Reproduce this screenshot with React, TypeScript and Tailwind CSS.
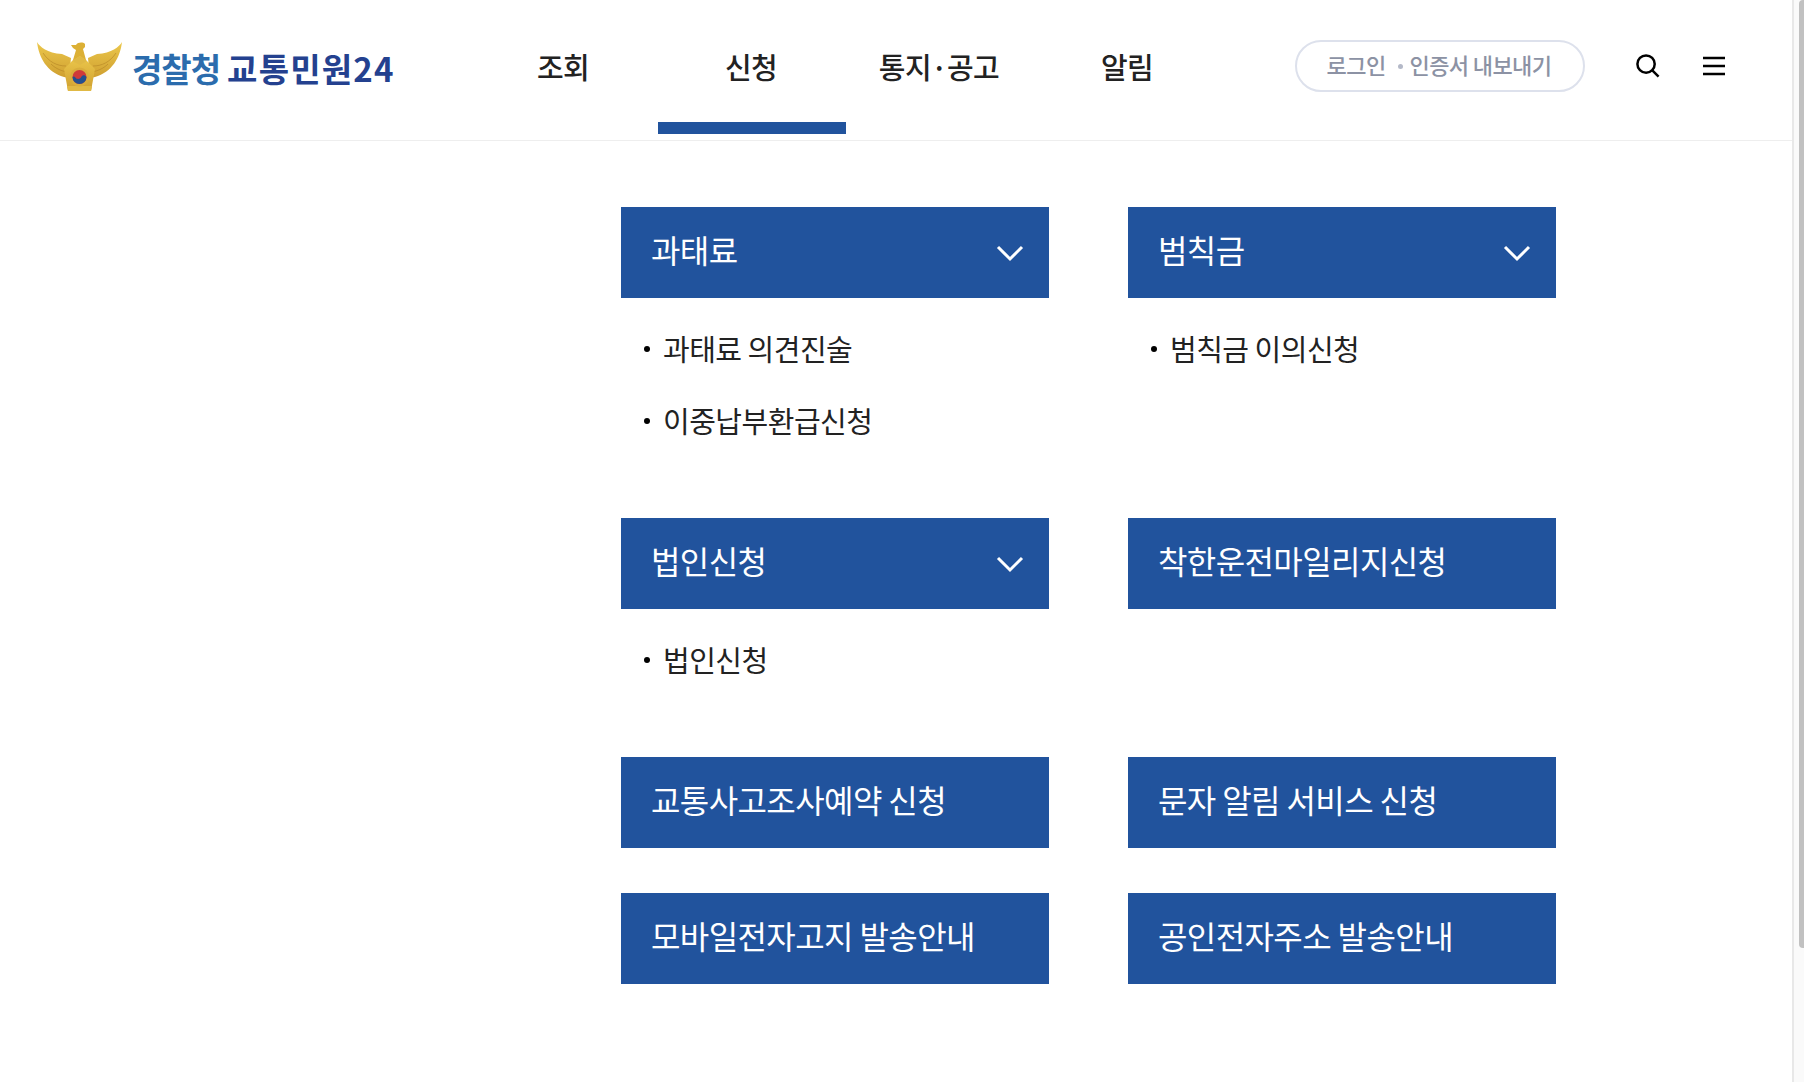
const FONT = 'font-["Noto_Sans_CJK_KR","Noto_Sans",sans-serif]'

const navItems = ['조회', '신청', '통지·공고', '알림']

type Card = { title: string; links?: string[] }

const cards: Card[] = [
  { title: '과태료', links: ['과태료 의견진술', '이중납부환급신청'] },
  { title: '범칙금', links: ['범칙금 이의신청'] },
  { title: '법인신청', links: ['법인신청'] },
  { title: '착한운전마일리지신청' },
  { title: '교통사고조사예약 신청' },
  { title: '문자 알림 서비스 신청' },
  { title: '모바일전자고지 발송안내' },
  { title: '공인전자주소 발송안내' },
]

function Emblem() {
  return (
    <svg className="shrink-0" width="86" height="52" viewBox="0 0 86 52" aria-hidden="true">
      <defs>
        <linearGradient id="gold" x1="0" y1="0" x2="0" y2="1">
          <stop offset="0" stopColor="#ecc84c" />
          <stop offset="1" stopColor="#cf9f30" />
        </linearGradient>
      </defs>
      {/* wings */}
      <path d="M0 1 C3 6 10 12 25 13 L34 17 L32 37 L27 36 C10 31 2 17 0 1Z" fill="url(#gold)" />
      <path d="M85 1 C82 6 75 12 60 13 L51 17 L53 37 L58 36 C75 31 83 17 85 1Z" fill="url(#gold)" />
      <path d="M6 12 C12 21 20 25 29 25 M14 23 C19 28 25 30 30 31 M79 12 C73 21 65 25 56 25 M71 23 C66 28 60 30 55 31" fill="none" stroke="#b98a28" strokeWidth="1" opacity="0.7" />
      {/* head and neck */}
      <path d="M34 4 L39 4 C41 1 46 1 48 3 L48 6 L46 8 L49 19 L36 19 L39 9 L36 7Z" fill="#dcb035" />
      {/* shield */}
      <path d="M27 28 L35 20 L43 15 L50 20 L58 28 L54 50 L31 50Z" fill="url(#gold)" />
      <path d="M35 20 L43 15 L50 20 L43 24Z M31 50 L54 50 L55 45 L30 45Z" fill="#e0b945" />
      <circle cx="42.5" cy="36" r="9.5" fill="#d9ad3c" />
      <circle cx="42.5" cy="36" r="7" fill="#cf3a3a" />
      <path d="M35.5 36 A7 7 0 0 0 49.5 36 C48 33.5 45.5 33.5 44.2 36 C43 38.5 39.8 38.5 38.6 36.8 C37.6 35.2 36.2 35 35.5 36Z" fill="#23508f" />
    </svg>
  )
}

function ChevronDown() {
  return (
    <svg width="28" height="18" viewBox="0 0 28 18" fill="none" stroke="#ffffff" strokeWidth="3" aria-hidden="true">
      <path d="M2 3 L14 15 L26 3" />
    </svg>
  )
}

function CardBlock({ card }: { card: Card }) {
  return (
    <div>
      <div className="flex h-[91px] items-center justify-between bg-[#21539d] pl-[30px] pr-[25px]">
        <span className="-mt-[7px] text-[32px] leading-none font-normal tracking-[-0.6px] text-white">{card.title}</span>
        {card.links && <ChevronDown />}
      </div>
      {card.links && (
        <ul className="pt-[15px] pb-[16px]">
          {card.links.map(link => (
            <li key={link} className="flex h-[72px] items-center pl-[23px] text-[#222222]">
              <span className="mr-[13px] h-[6px] w-[6px] rounded-full bg-black" />
              <span className="-mt-[2px] text-[29px] leading-none tracking-[-0.5px]">{link}</span>
            </li>
          ))}
        </ul>
      )}
    </div>
  )
}

export default function App() {
  return (
    <div className={`flex h-screen overflow-hidden bg-white ${FONT}`}>
      <div className="min-w-0 flex-1">
        <header className="flex h-[141px] items-start border-b border-[#eeeeee]">
          <div className="flex w-[470px] shrink-0 items-center pl-[37px] pt-[41px]">
            <Emblem />
            <span className="ml-[9px] mt-[3px] text-[33px] leading-none font-bold tracking-[-1px] whitespace-nowrap">
              <span className="text-[#2b6cad]">경찰청</span>
              <span className="ml-[7px] tracking-[1.2px] text-[#24418f]">교통민원24</span>
            </span>
          </div>
          <nav className="flex shrink-0">
            {navItems.map((item, i) => (
              <div
                key={item}
                className={`flex h-[134px] w-[188px] items-center justify-center border-b-[12px] pt-[11px] pr-[2px] ${i === 1 ? 'border-[#21539d]' : 'border-transparent'}`}
              >
                <span className="text-[29px] leading-none font-medium tracking-[-0.6px] text-[#222222]">{item}</span>
              </div>
            ))}
          </nav>
          <div className="ml-[73px] mt-[40px] flex h-[52px] w-[290px] shrink-0 items-center justify-center rounded-full border-2 border-[#dde1ec] pb-[4px] pr-[2px] text-[22px] leading-none font-medium tracking-[-0.6px] whitespace-nowrap text-[#8c92a4]">
            <span>로그인</span>
            <span className="ml-[12px] mr-[7px] mt-[4px] h-[5px] w-[5px] rounded-full bg-[#b4b9c8]" />
            <span>인증서 내보내기</span>
          </div>
          <svg className="ml-[50px] mt-[53px] shrink-0" width="25" height="25" viewBox="0 0 26 26" fill="none" stroke="#000000" strokeWidth="2.6" aria-hidden="true">
            <circle cx="11.5" cy="11.5" r="9" />
            <path d="M18 18 L24.5 24.5" />
          </svg>
          <svg className="ml-[43px] mt-[56px] shrink-0" width="22" height="20" viewBox="0 0 22 20" fill="none" stroke="#000000" strokeWidth="2.4" aria-hidden="true">
            <path d="M0 2 H22 M0 10 H22 M0 18 H22" />
          </svg>
        </header>
        <main className="ml-[621px] mt-[66px] grid w-[935px] grid-cols-[428px_428px] gap-x-[79px] gap-y-[45px]">
          {cards.map(card => (
            <CardBlock key={card.title} card={card} />
          ))}
        </main>
      </div>
      <div className="w-[12px] shrink-0 border-l-2 border-[#e8e8e8] bg-[#fafafa] pl-[5px]">
        <div className="h-[948px] rounded-bl-[4px] rounded-tl-[4px] bg-[#c1c1c1]" />
      </div>
    </div>
  )
}
